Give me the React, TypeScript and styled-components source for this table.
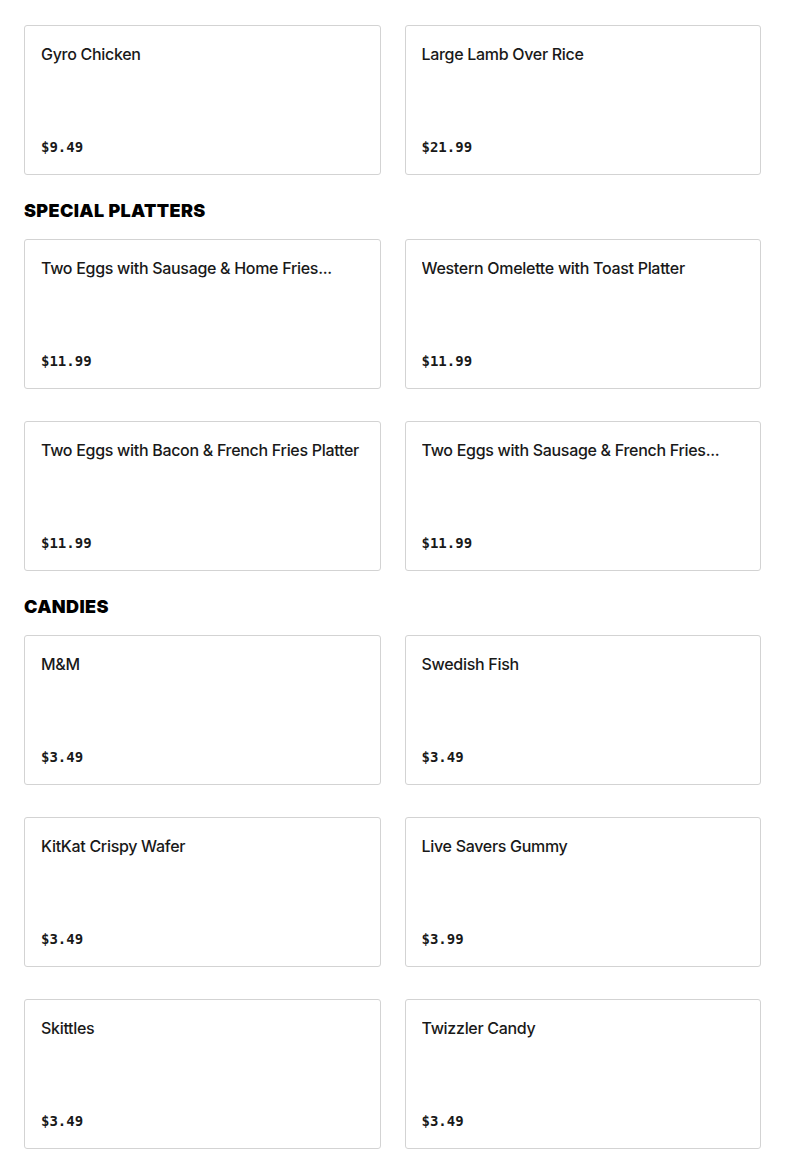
import styled, { createGlobalStyle } from "styled-components";

const GlobalStyle = createGlobalStyle`
  body {
    margin: 0;
    background: #ffffff;
    font-family: Inter, "Noto Sans", sans-serif;
    color: #191919;
  }
`;

const Page = styled.div`
  padding: 25px 24px 0;
  display: flex;
  flex-direction: column;
  gap: 24px;
`;

const Section = styled.section`
  display: flex;
  flex-direction: column;
  gap: 16px;
`;

const Heading = styled.h2`
  margin: 0;
  font-family: Inter, "Liberation Sans", sans-serif;
  font-size: 18px;
  line-height: 24px;
  font-weight: 900;
  letter-spacing: 0.35px;
  color: #000;
`;

const Grid = styled.div`
  display: grid;
  grid-template-columns: minmax(0, 1fr) minmax(0, 1fr);
  column-gap: 24px;
  row-gap: 32px;
`;

const Card = styled.div`
  box-sizing: border-box;
  height: 150px;
  border: 1px solid #d3d3d3;
  border-radius: 3px;
  padding: 16px 16px 17px;
  display: flex;
  flex-direction: column;
  justify-content: space-between;
`;

const Name = styled.div`
  font-size: 16px;
  line-height: 24px;
  font-weight: 500;
  letter-spacing: -0.3px;
  color: #191919;
  white-space: nowrap;
  overflow: hidden;
`;

const Price = styled.div`
  font-family: "DejaVu Sans Mono", "Liberation Mono", monospace;
  font-size: 14px;
  line-height: 20px;
  font-weight: 700;
  color: #191919;
`;

interface IItem {
  name: string;
  price: string;
}

interface ISection {
  title?: string;
  items: IItem[];
}

const menu: ISection[] = [
  {
    items: [
      { name: "Gyro Chicken", price: "$9.49" },
      { name: "Large Lamb Over Rice", price: "$21.99" },
    ],
  },
  {
    title: "SPECIAL PLATTERS",
    items: [
      { name: "Two Eggs with Sausage & Home Fries...", price: "$11.99" },
      { name: "Western Omelette with Toast Platter", price: "$11.99" },
      { name: "Two Eggs with Bacon & French Fries Platter", price: "$11.99" },
      { name: "Two Eggs with Sausage & French Fries...", price: "$11.99" },
    ],
  },
  {
    title: "CANDIES",
    items: [
      { name: "M&M", price: "$3.49" },
      { name: "Swedish Fish", price: "$3.49" },
      { name: "KitKat Crispy Wafer", price: "$3.49" },
      { name: "Live Savers Gummy", price: "$3.99" },
      { name: "Skittles", price: "$3.49" },
      { name: "Twizzler Candy", price: "$3.49" },
    ],
  },
];

function App() {
  return (
    <>
      <GlobalStyle />
      <Page>
        {menu.map((section, i) => (
          <Section key={i}>
            {section.title && <Heading>{section.title}</Heading>}
            <Grid>
              {section.items.map((item) => (
                <Card key={item.name}>
                  <Name>{item.name}</Name>
                  <Price>{item.price}</Price>
                </Card>
              ))}
            </Grid>
          </Section>
        ))}
      </Page>
    </>
  );
}

export default App;
